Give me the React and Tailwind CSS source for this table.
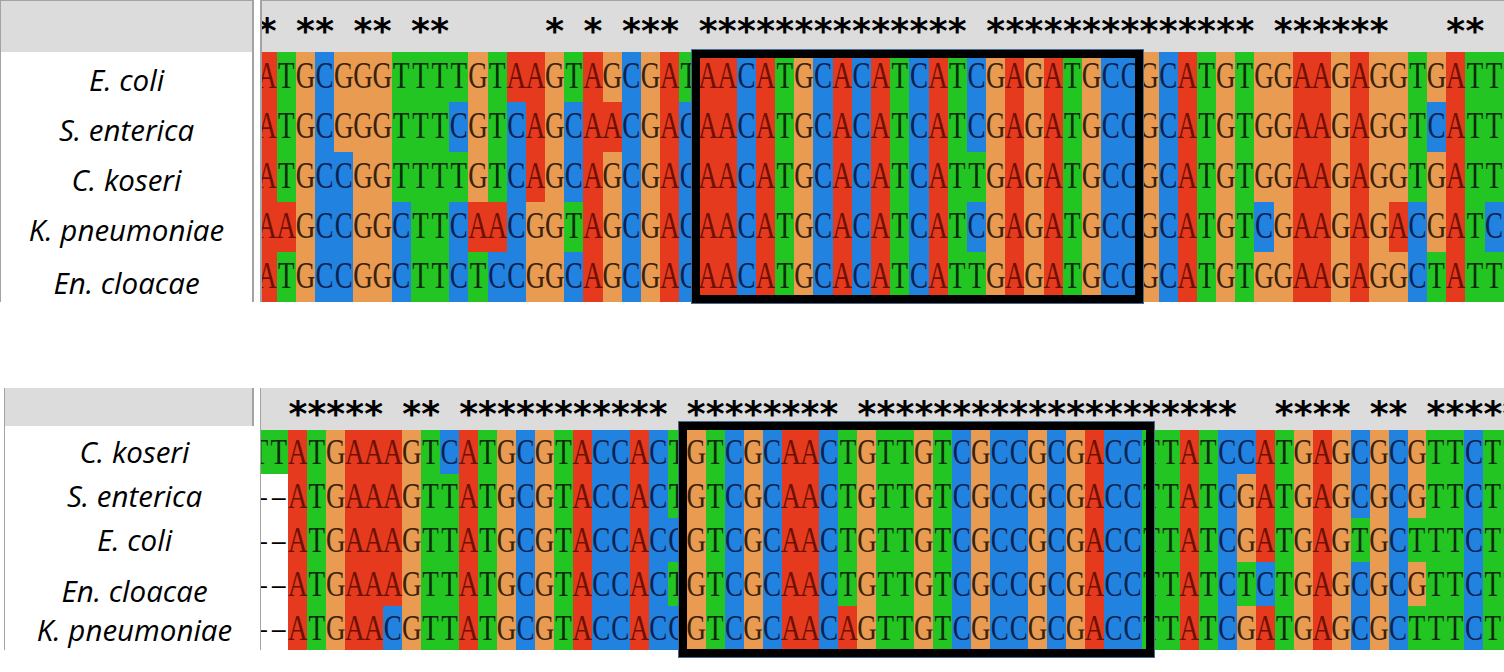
import React from 'react';

const BG = {
  A: 'bg-[#e53a1e]',
  C: 'bg-[#2182e0]',
  G: 'bg-[#e99b52]',
  T: 'bg-[#22c522]',
  '-': 'bg-white',
};
const FG = {
  A: 'text-[#6e1003]',
  C: 'text-[#0b2350]',
  G: 'text-[#3b220b]',
  T: 'text-[#0c2c0c]',
  '-': 'text-black',
};

const TOP_LABELS = ['E. coli', 'S. enterica', 'C. koseri', 'K. pneumoniae', 'En. cloacae'];
const TOP_SEQS = [
  'ATGCGGGTTTTGTAAGTAGCGAT' + 'AACATGCACATCATCGAGATGCC' + 'GCATGTGGAAGAGGTGATT',
  'ATGCGGGTTTCGTCAGCAACGAC' + 'AACATGCACATCATCGAGATGCC' + 'GCATGTGGAAGAGGTCATT',
  'ATGCCGGTTTTGTCAGCAGCGAC' + 'AACATGCACATCATTGAGATGCC' + 'GCATGTGGAAGAGGTGATT',
  'AAGCCGGCTTCAACGGTAGCGAC' + 'AACATGCACATCATCGAGATGCC' + 'GCATGTCGAAGAGACGATC',
  'ATGCCGGCTTCTCCGGCAGCGAC' + 'AACATGCACATCATTGAGATGCC' + 'GCATGTGGAAGAGGCTATT',
];

const BOT_LABELS = ['C. koseri', 'S. enterica', 'E. coli', 'En. cloacae', 'K. pneumoniae'];
const BOT_SEQS = [
  'TTATGAAAGTCATGCGTACCACT' + 'GTCGCAACTGTTGTCGCCGCGACC' + 'TTATCCATGAGCGCGTTCTT',
  '--ATGAAAGTTATGCGTACCACT' + 'GTCGCAACTGTTGTCGCCGCGACC' + 'TTATCGATGAGCGCGTTCTT',
  '--ATGAAAGTTATGCGTACCACC' + 'GTCGCAACTGTTGTCGCCGCGACC' + 'TTATCGATGAGTGCTTTCTT',
  '--ATGAAAGTTATGCGTACCACT' + 'GTCGCAACTGTTGTCGCCGCGACC' + 'TTATCTCTGAGCGCGTTCTT',
  '--ATGAACGTTATGCGTACCACC' + 'GTCGCAACAGTTGTCGCCGCGACC' + 'TTATCGATGAGCGCTTTCTT',
];

function conserved(seqs, i) {
  const c = seqs[0][i];
  if (c === '-') return false;
  return seqs.every((s) => s[i] === c);
}

const LABEL = "font-['Open_Sans',sans-serif] italic text-[29.5px] text-black leading-none whitespace-nowrap";

function SeqRow({ seq, cellClass, letterClass }) {
  return (
    <div className="flex">
      {seq.split('').map((ch, i) => (
        <div key={i} className={`flex shrink-0 items-center justify-center ${cellClass} ${BG[ch]}`}>
          <span className={`inline-block ${letterClass} ${FG[ch]}`}>{ch === '-' ? '\u2013' : ch}</span>
        </div>
      ))}
    </div>
  );
}

function StarRow({ seqs, cellClass, padClass }) {
  const n = seqs[0].length;
  return (
    <div className="flex h-full">
      {Array.from({ length: n }).map((_, i) => (
        <div key={i} className={`flex shrink-0 items-start justify-center ${cellClass} ${padClass}`}>
          <span className="inline-block font-['DejaVu_Sans',sans-serif] text-[36px] font-bold leading-none text-black">
            {conserved(seqs, i) ? '*' : ''}
          </span>
        </div>
      ))}
    </div>
  );
}

export default function App() {
  const topLetter = "font-['Liberation_Serif',serif] text-[27px] leading-none scale-y-[1.4]";
  const botLetter = "font-['Liberation_Serif',serif] text-[27px] leading-none scale-y-[1.35]";
  return (
    <div className="flex h-[672px] w-[1504px] flex-col overflow-hidden bg-white">
      {/* Top alignment */}
      <div className="relative flex h-[302px] shrink-0">
        <div className="flex w-[254px] shrink-0 flex-col border-l border-r-2 border-t border-[#a3a3a3]">
          <div className="h-[50.7px] shrink-0 bg-[#dcdcdc]" />
          <div className="flex flex-col bg-white pt-[3px]">
            {TOP_LABELS.map((l, i) => (
              <div
                key={l}
                className={`flex h-[50px] shrink-0 items-center justify-center ${LABEL} ${i === 4 ? 'mt-[3px]' : ''}`}
              >
                {l}
              </div>
            ))}
          </div>
        </div>
        <div className="w-[6px] shrink-0" />
        <div className="flex min-w-0 flex-1 flex-col overflow-hidden border-l-2 border-t border-[#a3a3a3]">
          <div className="h-[50.7px] shrink-0 bg-[#dcdcdc]">
            <div className="ml-[-4.5px] h-full">
              <StarRow seqs={TOP_SEQS} cellClass="w-[19.18px]" padClass="pt-[12px]" />
            </div>
          </div>
          <div className="ml-[-4.5px] flex flex-col">
            {TOP_SEQS.map((s, i) => (
              <SeqRow key={i} seq={s} cellClass="h-[50px] w-[19.18px]" letterClass={topLetter} />
            ))}
          </div>
        </div>
        <div className="absolute left-[691.7px] top-[50px] h-[253px] w-[451px] border-[8px] border-black shadow-[0_0_0_1px_#4b6a8f]" />
      </div>

      {/* Bottom alignment */}
      <div className="relative mt-[86px] flex h-[262px] shrink-0">
        <div className="ml-[4px] flex w-[250px] shrink-0 flex-col border-l border-[#a3a3a3]">
          <div className="h-[38px] shrink-0 border-r-2 border-[#a3a3a3] bg-[#dcdcdc]" />
          <div className="flex flex-col pl-[10px] pt-[4px]">
            {BOT_LABELS.map((l, i) => (
              <div
                key={l}
                className={`flex h-[44px] shrink-0 items-center justify-center ${LABEL} ${
                  i === 3 ? 'mt-[7px]' : i === 4 ? 'mt-[-5px]' : ''
                }`}
              >
                {l}
              </div>
            ))}
          </div>
        </div>
        <div className="w-[6px] shrink-0" />
        <div className="flex min-w-0 flex-1 flex-col overflow-hidden border-l border-[#a3a3a3]">
          <div className="h-[42px] shrink-0 bg-[#dcdcdc]">
            <div className="ml-[-10.6px] h-full">
              <StarRow seqs={BOT_SEQS} cellClass="w-[18.97px]" padClass="pt-[8px]" />
            </div>
          </div>
          <div className="ml-[-10.6px] flex flex-col">
            {BOT_SEQS.map((s, i) => (
              <SeqRow key={i} seq={s} cellClass="h-[44px] w-[18.97px]" letterClass={botLetter} />
            ))}
          </div>
        </div>
        <div className="absolute left-[679px] top-[33.7px] h-[235px] w-[475px] border-[8px] border-black shadow-[0_0_0_1px_#4b6a8f]" />
      </div>
    </div>
  );
}
